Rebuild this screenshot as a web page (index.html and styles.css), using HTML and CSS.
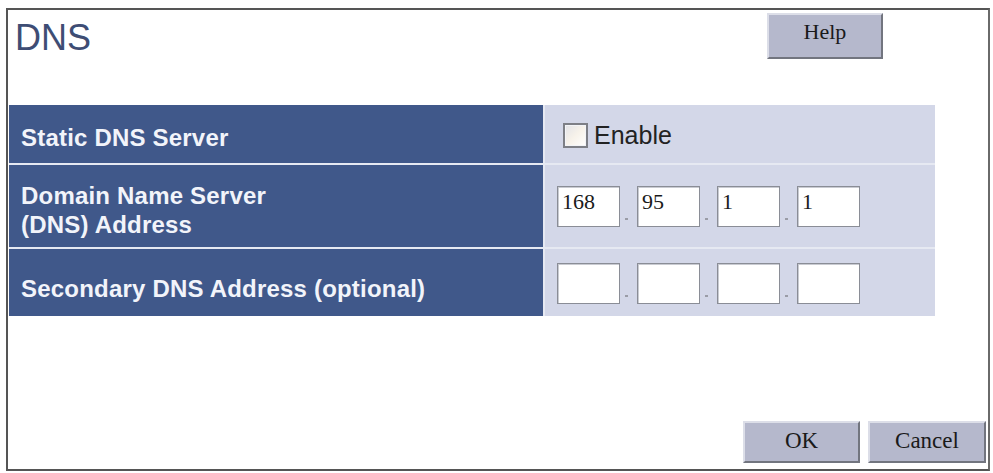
FILE: index.html
```html
<!DOCTYPE html>
<html>
<head>
<meta charset="utf-8">
<title>DNS</title>
<link rel="stylesheet" href="styles.css">
</head>
<body>
<div class="frame">
  <div class="header">
    <h1 class="title">DNS</h1>
    <button class="btn btn-help" type="button">Help</button>
  </div>
  <div class="table">
    <div class="label row1">Static DNS Server</div>
    <div class="value row1">
      <label class="enable"><input type="checkbox" class="check"><span>Enable</span></label>
    </div>
    <div class="label row2">Domain Name Server<br>(DNS) Address</div>
    <div class="value row2">
      <div class="ip">
        <input class="oct" type="text" value="168"><span class="dot"></span>
        <input class="oct" type="text" value="95"><span class="dot"></span>
        <input class="oct" type="text" value="1"><span class="dot"></span>
        <input class="oct" type="text" value="1">
      </div>
    </div>
    <div class="label row3">Secondary DNS Address (optional)</div>
    <div class="value row3">
      <div class="ip">
        <input class="oct" type="text" value=""><span class="dot"></span>
        <input class="oct" type="text" value=""><span class="dot"></span>
        <input class="oct" type="text" value=""><span class="dot"></span>
        <input class="oct" type="text" value="">
      </div>
    </div>
  </div>
  <div class="footer">
    <button class="btn btn-ok" type="button">OK</button>
    <button class="btn btn-cancel" type="button">Cancel</button>
  </div>
</div>
</body>
</html>
```

FILE: styles.css
```css
html, body {
  margin: 0;
  padding: 0;
  background: #ffffff;
}

body {
  font-family: "Liberation Sans", Arial, sans-serif;
}

.frame {
  box-sizing: border-box;
  margin: 8px 3px 0 6px;
  width: 984px;
  height: 463px;
  border: 2px solid #555555;
  border-right-color: #6a6a6a;
  display: flex;
  flex-direction: column;
  background: #ffffff;
}

.header {
  display: flex;
  justify-content: space-between;
  align-items: flex-start;
  padding: 3px 105px 0 7px;
}

.title {
  margin: 5px 0 0 0;
  font-size: 36px;
  line-height: 40px;
  font-weight: normal;
  color: #3e4d74;
}

.btn {
  box-sizing: border-box;
  font-family: "Liberation Serif", "Times New Roman", serif;
  font-size: 22px;
  color: #1a1a1a;
  background: #b5b8cc;
  border: 2px solid;
  border-color: #dcdee8 #72757f #72757f #dcdee8;
  padding: 0;
  cursor: pointer;
}

.btn-help {
  width: 116px;
  height: 46px;
  padding-bottom: 8px;
}

.table {
  margin: 46px 0 0 1px;
  width: 926px;
  display: grid;
  grid-template-columns: 534px 390px;
  grid-template-rows: 58px 82px 67px;
  column-gap: 2px;
  row-gap: 2px;
  background: #e6e9f2;
}

.label {
  box-sizing: border-box;
  background: #40588a;
  color: #f2f4fa;
  font-weight: bold;
  font-size: 24px;
  letter-spacing: 0.2px;
  line-height: 29px;
  padding: 6px 0 0 12px;
  display: flex;
  align-items: center;
}

.label.row2 {
  padding-top: 8px;
}

.label.row3 {
  padding-top: 12px;
}

.value {
  background: #d3d7e8;
  display: flex;
  align-items: center;
  padding-left: 12px;
}

.enable {
  display: flex;
  align-items: center;
  margin-left: 6px;
  margin-top: 3px;
  font-size: 25px;
  color: #222222;
}

.check {
  appearance: none;
  -webkit-appearance: none;
  box-sizing: border-box;
  width: 25px;
  height: 25px;
  margin: 0 6px 0 0;
  border: 2px solid #7d7f86;
  background: linear-gradient(135deg, #e2e3e8 0%, #f7f2ea 50%, #ffffff 100%);
  box-shadow: inset 0 0 0 1px #f3f4f7;
}

.ip {
  display: flex;
  align-items: flex-end;
  margin-top: 1px;
}

.oct {
  box-sizing: border-box;
  width: 63px;
  height: 41px;
  margin: 0;
  padding: 3px 4px 13px 4px;
  border: 1px solid #8a8d96;
  box-shadow: inset 1px 1px 0 #c9cbd2;
  background: #ffffff;
  font-family: "Liberation Serif", "Times New Roman", serif;
  font-size: 22px;
  line-height: 24px;
  color: #1a1a1a;
  outline: none;
}

.dot {
  width: 17px;
  height: 41px;
  display: flex;
  justify-content: center;
}

.dot::after {
  content: "";
  width: 3px;
  height: 2px;
  background: #9a9ca6;
  align-self: flex-end;
  margin-bottom: 7px;
  margin-right: 5px;
}

.footer {
  margin-top: auto;
  display: flex;
  justify-content: flex-end;
  gap: 8px;
  padding: 0 2px 6px 0;
}

.btn-ok,
.btn-cancel {
  height: 42px;
  font-size: 23px;
  padding-bottom: 2px;
}

.btn-ok {
  width: 117px;
}

.btn-cancel {
  width: 118px;
}
```
